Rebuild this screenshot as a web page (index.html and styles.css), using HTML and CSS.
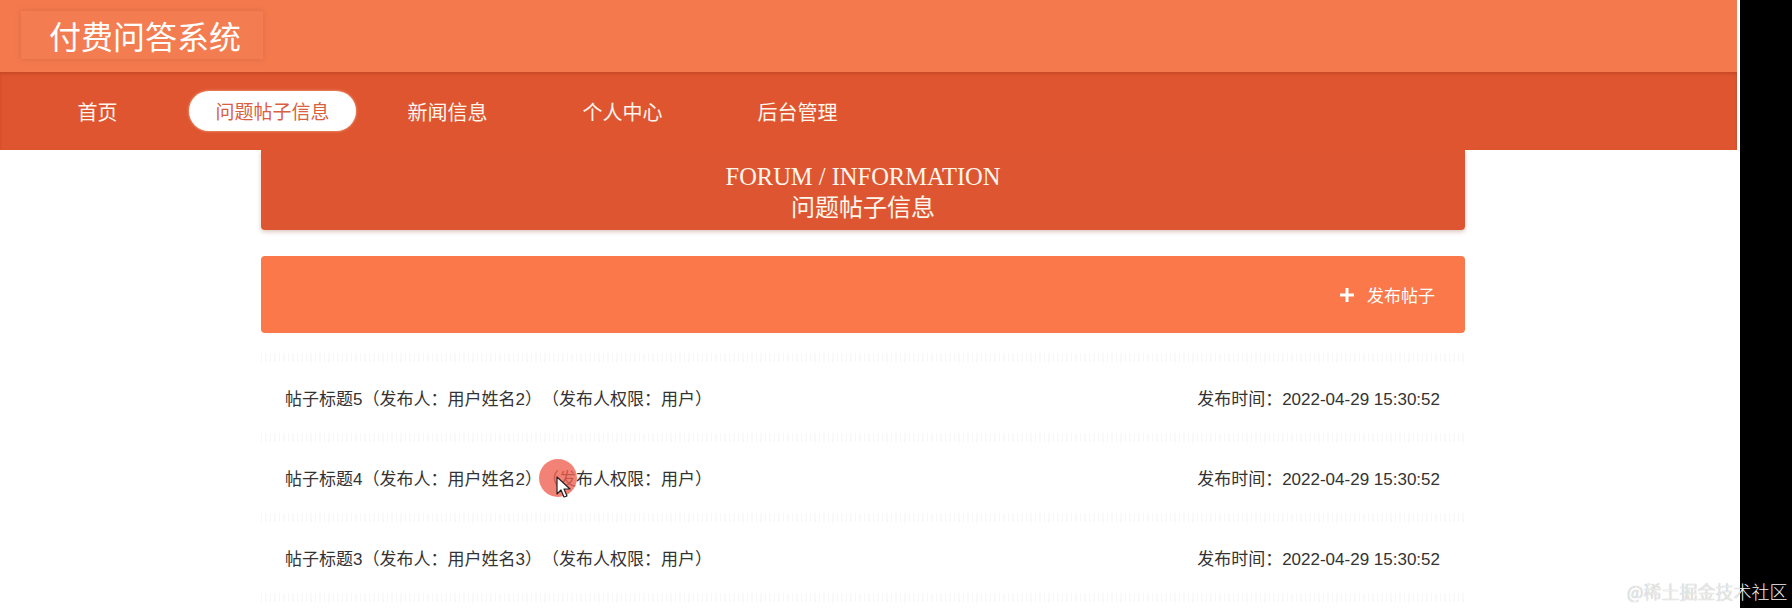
FILE: index.html
```html
<!DOCTYPE html>
<html lang="zh-CN">
<head>
  <meta charset="UTF-8">
  <title>付费问答系统</title>
  <link rel="stylesheet" href="styles.css">
</head>
<body>
<div class="screen">
  <div class="page">
    <!-- 顶部标题 -->
    <header class="top">
      <div class="logo">付费问答系统</div>
    </header>

    <!-- 导航 -->
    <nav class="nav">
      <a class="nav-item">首页</a>
      <a class="nav-item active"><span>问题帖子信息</span></a>
      <a class="nav-item">新闻信息</a>
      <a class="nav-item">个人中心</a>
      <a class="nav-item">后台管理</a>
    </nav>

    <div class="container">
      <div class="banner">
        <p class="en">FORUM / INFORMATION</p>
        <p class="cn">问题帖子信息</p>
      </div>

      <div class="toolbar">
        <a class="add-btn">
          <svg width="14" height="14" viewBox="0 0 14 14"><rect x="5.5" y="0" width="3" height="14" fill="#fff"/><rect x="0" y="5.5" width="14" height="3" fill="#fff"/></svg>
          发布帖子
        </a>
      </div>

      <div class="list">
        <div class="sep"></div>
        <div class="row">
          <span>帖子标题5（发布人：用户姓名2）（发布人权限：用户）</span>
          <span>发布时间：2022-04-29 15:30:52</span>
        </div>
        <div class="sep"></div>
        <div class="row">
          <span>帖子标题4（发布人：用户姓名2）（发布人权限：用户）</span>
          <span>发布时间：2022-04-29 15:30:52</span>
        </div>
        <div class="sep"></div>
        <div class="row">
          <span>帖子标题3（发布人：用户姓名3）（发布人权限：用户）</span>
          <span>发布时间：2022-04-29 15:30:52</span>
        </div>
        <div class="sep"></div>
      </div>
    </div>
  </div>
  <div class="side"></div>

  <!-- 鼠标点击标记 -->
  <div class="click-dot"></div>
  <svg class="pointer" width="16" height="24" viewBox="0 0 16 24">
    <path d="M1 1 L1 18 L5 14 L8 21 L11 20 L8 13 L14 13 Z" fill="#fff" stroke="#222" stroke-width="1.2" stroke-linejoin="round"/>
  </svg>

  <div class="watermark">@稀土掘金技术社区</div>
</div>
</body>
</html>
```

FILE: styles.css
```css
*{margin: 0;padding: 0;box-sizing: border-box;}
body{
  background: #000;
  font-family: "Liberation Sans", "Noto Sans CJK SC", sans-serif;
  text-spacing-trim: space-all;
  overflow: hidden;
}
.screen{
  position: relative;
  display: flex;
  width: 1792px;
  height: 608px;
  overflow: hidden;
}
.page{
  width: 1740px;
  height: 608px;
  background: #fff;
  padding-right: 3px;
}
.side{
  flex: 1;
  background: #000;
}

/* 顶部标题 */
.top{
  height: 72px;
  background: #f47a4e;
  padding: 11px 0 0 21px;
}
.logo{
  display: inline-block;
  height: 48px;
  line-height: 48px;
  padding: 0 22px 0 28px;
  font-size: 32px;
  color: #fff;
  background: #f47c51;
  box-shadow: 0 0 6px rgba(150, 60, 30, 0.25);
  font-family: "Noto Sans CJK SC", sans-serif;
}

/* 导航 */
.nav{
  display: flex;
  height: 78px;
  padding-left: 10px;
  background: #de5530;
  box-shadow: inset 0 2px 3px rgba(160, 50, 20, 0.35);
  position: relative;
  z-index: 2;
}
.nav-item{
  width: 175px;
  display: flex;
  align-items: center;
  justify-content: center;
  font-size: 20px;
  color: #fff6ee;
  font-family: "Noto Sans CJK SC", sans-serif;
}
.nav-item.active span{
  display: block;
  height: 40px;
  line-height: 40px;
  padding: 0 26px;
  border-radius: 20px;
  background: #fff;
  color: #d9603f;
  font-size: 19px;
  box-shadow: 0 0 3px rgba(255, 200, 170, 0.8);
}

/* 内容 */
.container{
  width: 1204px;
  margin-left: 261px;
}
.banner{
  height: 80px;
  padding-top: 13px;
  background: #de5631;
  border-radius: 0 0 4px 4px;
  box-shadow: 0 2px 4px rgba(120, 40, 10, 0.25);
  text-align: center;
  color: #fff6ee;
}
.banner .en{
  font-family: "Liberation Serif", serif;
  font-size: 24.5px;
  line-height: 28px;
}
.banner .cn{
  font-family: "Noto Sans CJK SC", serif;
  font-size: 24px;
  line-height: 30px;
}

.toolbar{
  height: 77px;
  margin-top: 26px;
  background: #fa784a;
  border-radius: 4px;
  display: flex;
  align-items: center;
  justify-content: flex-end;
  padding-right: 30px;
}
.add-btn{
  display: flex;
  align-items: center;
  gap: 13px;
  font-size: 17px;
  color: #fff;
}

/* 帖子列表 */
.list{
  margin-top: 20px;
}
.sep{
  height: 9px;
  background: repeating-linear-gradient(90deg, rgba(190, 190, 200, 0.13) 0 1px, transparent 1px 4px, rgba(200, 190, 170, 0.09) 4px 6px, transparent 6px 9px);
}
.row{
  height: 71px;
  display: flex;
  align-items: center;
  justify-content: space-between;
  padding: 0 25px 0 24px;
  font-size: 17px;
  color: #333;
}

/* 鼠标点击标记 */
.click-dot{
  position: absolute;
  left: 539px;
  top: 459px;
  width: 38px;
  height: 38px;
  border-radius: 50%;
  background: rgba(240, 95, 80, 0.78);
}
.pointer{
  position: absolute;
  left: 556px;
  top: 476px;
}

.watermark{
  position: absolute;
  left: 1627px;
  top: 578px;
  font-family: "Noto Sans CJK SC", sans-serif;
  font-weight: 300;
  font-size: 18px;
  color: #f2f2f2;
  text-shadow: 0 0 1px rgba(0, 0, 0, 0.45);
}
```
